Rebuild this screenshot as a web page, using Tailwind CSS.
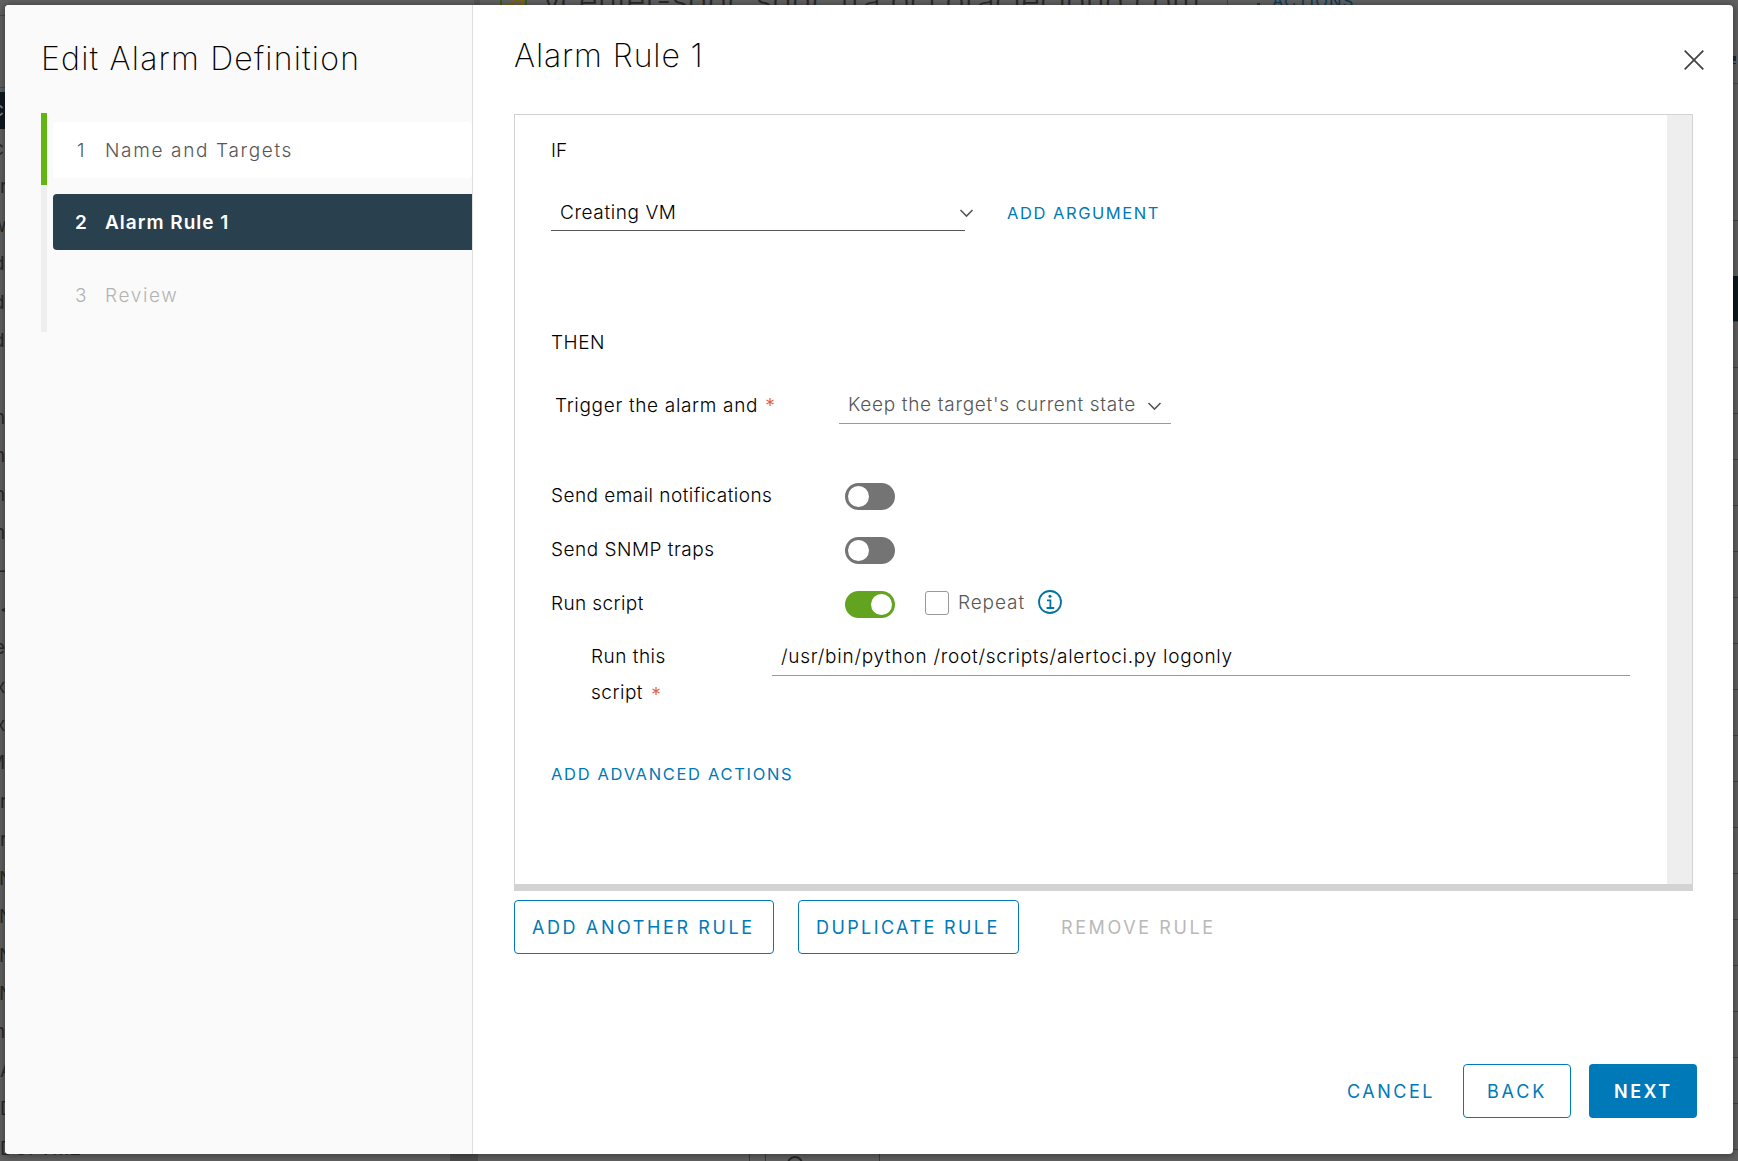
<!DOCTYPE html>
<html lang="en">
<head>
<meta charset="utf-8">
<title>Edit Alarm Definition</title>
<script src="https://cdn.jsdelivr.net/npm/@tailwindcss/browser@4"></script>
</head>
<body class="relative h-[1161px] w-[1738px] overflow-hidden whitespace-nowrap bg-[#616161] font-['Inter',sans-serif] text-[19px] font-light leading-[28px] text-black">

<!-- Dimmed page behind the dialog -->
<div class="absolute inset-0 overflow-hidden font-normal text-[#2a2a2a]" aria-hidden="true">
  <div class="absolute left-0 top-[15px] h-px w-[5px] bg-[#4a4a4a]"></div>
  <div class="absolute left-0 top-[87px] h-px w-[5px] bg-[#4a4a4a]"></div>
  <div class="absolute left-0 top-[92px] h-[37px] w-[5px] overflow-hidden bg-[#0f1a1e] leading-[36px] text-[#8a8a8a]"><span class="-ml-[7px]">c</span></div>
  <div class="absolute left-0 top-[130px] flex w-[5px] flex-col overflow-hidden leading-[38.4px]">
    <span class="-ml-[7px]">c</span><span>r</span><span class="-ml-[9px]">w</span><span class="-ml-[7px]">d</span><span class="-ml-[7px]">d</span><span class="-ml-[7px]">d</span><span class="h-[38.4px]"></span><span class="-ml-[6px]">n</span><span class="-ml-[6px]">n</span><span class="-ml-[6px]">n</span><span class="-ml-[6px]">n</span><span class="-ml-[2px]">-</span><span>&lt;</span><span class="-ml-[6px]">e</span><span class="-ml-[5px]">x</span><span class="-ml-[5px]">x</span><span class="-ml-[12px]">M</span><span>r</span><span>r</span><span class="-ml-px">N</span><span class="-ml-px">N</span><span class="-ml-px">N</span><span class="-ml-px">N</span><span class="-ml-[6px]">n</span><span>A</span><span>D</span>
  </div>
  <div class="absolute left-0 top-[1130px] leading-[38px]">DGFVM2</div>
  <div class="absolute left-[474px] top-0 h-[5px] w-[6px] bg-[#565656]"></div>
  <div class="absolute left-[450px] top-[1154px] h-[7px] w-[28px] bg-[#4c4c4c]"></div>
  <div class="absolute left-[500px] -top-[20px] h-[40px] w-[27px] border-2 border-[#3c5a10]"></div>
  <svg class="absolute left-[504px] top-0" width="20" height="5" fill="none" stroke="#7a640c" stroke-width="2"><path d="M2 5V4H9V2M9 1H18V4H13"/></svg>
  <div class="absolute left-[543px] -top-[19px] text-[32px] font-light leading-[40px] tracking-[0.43px]">vcenter-sddc.sddc.fra.oci.oraclecloud.com</div>
  <div class="absolute left-[1227px] top-0 h-[5px] w-px bg-[#444]"></div>
  <div class="absolute left-[1257px] top-[3px] size-[3px] bg-[#0a3a58]"></div>
  <div class="absolute left-[1272px] -top-[18px] text-[16.5px] leading-[38px] tracking-[1.3px] text-[#0a3a58]">ACTIONS</div>
  <div class="absolute left-[1733px] top-[56px] h-[5px] w-[3px] bg-[#16285a]"></div>
  <div class="absolute left-[1733px] top-[63px] h-px w-[3px] bg-[#16285a]"></div>
  <div class="absolute left-[1733px] top-[83px] h-px w-[5px] bg-[#4a4a4a]"></div>
  <div class="absolute left-[1733px] top-[220px] h-px w-[5px] bg-[#444]"></div>
  <div class="absolute left-[1733px] top-[276px] h-[45px] w-[5px] bg-[#0c191d]"></div>
  <div class="absolute left-[1733px] top-[321px] flex w-[5px] flex-col gap-[45px]">
    <i class="h-px bg-[#444]"></i><i class="h-px bg-[#444]"></i><i class="h-px bg-[#444]"></i><i class="h-px bg-[#444]"></i><i class="h-px bg-[#444]"></i><i class="h-px bg-[#444]"></i><i class="h-px bg-[#444]"></i><i class="h-px bg-[#444]"></i><i class="h-px bg-[#444]"></i><i class="h-px bg-[#444]"></i><i class="h-px bg-[#444]"></i><i class="h-px bg-[#444]"></i><i class="h-px bg-[#444]"></i><i class="h-px bg-[#444]"></i><i class="h-px bg-[#444]"></i><i class="h-px bg-[#444]"></i><i class="h-px bg-[#444]"></i><i class="h-px bg-[#444]"></i><i class="h-px bg-[#444]"></i>
  </div>
  <div class="absolute left-[749px] top-[1154px] h-[7px] w-[17px] border-x border-[#3c3c3c]"></div>
  <div class="absolute left-[879px] top-[1154px] h-[7px] w-px bg-[#3c3c3c]"></div>
  <div class="absolute left-[787px] top-[1156px] size-[16px] rounded-full border-2 border-[#2a2a2a]"></div>
</div>

<!-- Wizard dialog -->
<div class="absolute left-[5px] top-[5px] flex h-[1149px] w-[1728px] overflow-hidden rounded-[4px] bg-white shadow-[0_1px_6px_2px_rgba(0,0,0,0.3)]" role="dialog">
  <aside class="w-[468px] shrink-0 border-r border-[#dedede] bg-[#fafafa] pl-9 pt-[34px]">
    <h1 class="h-10 text-[32px] font-extralight leading-10 tracking-[1.2px]">Edit Alarm Definition</h1>
    <ol class="mt-[34px]">
      <li class="h-[72px] border-l-6 border-[#60b515] pl-1.5 pt-[9px]">
        <div class="flex h-14 items-center rounded-[4px] bg-white pt-[2px] text-[#565656]"><span class="w-[52px] pl-6">1</span><span class="tracking-[1.65px]">Name and Targets</span></div>
      </li>
      <li class="h-[73px] border-l-6 border-[#eee] pl-1.5 pt-[9px]">
        <div class="flex h-14 items-center rounded-l-[4px] bg-[#29404f] pt-[2px] font-semibold text-white"><span class="w-[52px] pl-[22px]">2</span><span class="tracking-[1px]">Alarm Rule 1</span></div>
      </li>
      <li class="h-[74px] border-l-6 border-[#eee] pl-1.5 pt-[9px]">
        <div class="flex h-14 items-center pt-[2px] text-[#b3b3b3]"><span class="w-[52px] pl-[22px]">3</span><span class="tracking-[1.65px]">Review</span></div>
      </li>
    </ol>
  </aside>

  <main class="flex grow flex-col pb-9 pl-[41px] pr-9 pt-[31px]">
    <header class="flex h-10 items-start justify-between">
      <h2 class="text-[32px] font-extralight leading-10 tracking-[0.9px]">Alarm Rule 1</h2>
      <svg class="-mr-[7px] mt-[14px]" width="20" height="20" fill="none" stroke="#454545" stroke-width="1.8"><path d="M.7.7 19.3 19.3M19.3.7.7 19.3"/></svg>
    </header>

    <section class="mr-1 mt-[38px] flex h-[777px] border border-b-7 border-[#d3d3d3]">
      <div class="grow pl-9 pt-[15px]">
        <div class="h-10 leading-[42px]">IF</div>
        <div class="mt-6 flex h-[37px] items-center">
          <div class="flex h-[37px] w-[414px] items-center border-b border-[#565656] pl-[9px]"><span class="mt-[2px] tracking-[0.6px]">Creating VM</span>
            <svg class="-mr-[9px] ml-auto mt-[2px]" width="15" height="9" fill="none" stroke="#565656" stroke-width="1.6"><path d="M1.5 1 7.5 7 13.5 1"/></svg>
          </div>
          <a class="ml-[42px] mt-px text-[16.5px] font-normal tracking-[1.55px] text-[#0079b8]">ADD ARGUMENT</a>
        </div>
        <div class="mt-[91px] h-10 leading-[42px] tracking-[0.5px]">THEN</div>
        <div class="mt-[25px] flex h-[37px] items-center">
          <label class="flex w-[288px] items-center pl-1"><span class="tracking-[0.67px]">Trigger the alarm and</span><svg class="-mt-[7px] ml-2" width="8" height="8" stroke="#e0604c" stroke-width="1.2"><path d="M4 0V8M.5 2 7.5 6M7.5 2 .5 6"/></svg></label>
          <div class="flex h-[37px] w-[332px] items-center border-b border-[#9a9a9a] pl-[9px] text-[#565656]"><span class="tracking-[0.7px]">Keep the target's current state</span>
            <svg class="ml-auto mr-[9px] mt-[2px]" width="15" height="9" fill="none" stroke="#565656" stroke-width="1.6"><path d="M1.5 1 7.5 7 13.5 1"/></svg>
          </div>
        </div>
        <div class="mt-11 flex h-[54px] items-center"><span class="mt-[2px] w-[294px] tracking-[0.46px]">Send email notifications</span>
          <span class="mt-[3px] flex h-[27px] w-[50px] items-center rounded-full bg-[#747474] px-[3px]"><i class="size-[21px] rounded-full bg-white"></i></span></div>
        <div class="flex h-[54px] items-center"><span class="mt-[2px] w-[294px] tracking-[0.5px]">Send SNMP traps</span>
          <span class="mt-[3px] flex h-[27px] w-[50px] items-center rounded-full bg-[#747474] px-[3px]"><i class="size-[21px] rounded-full bg-white"></i></span></div>
        <div class="flex h-[54px] items-center"><span class="mt-[2px] w-[294px] tracking-[0.4px]">Run script</span>
          <span class="mt-[3px] flex h-[27px] w-[50px] items-center justify-end rounded-full bg-[#62a420] px-[3px]"><i class="size-[21px] rounded-full bg-white"></i></span>
          <i class="ml-[30px] size-6 rounded-[3px] border border-[#9a9a9a]"></i>
          <span class="ml-[9px] w-[70px] tracking-[0.9px] text-[#565656]">Repeat</span>
          <svg class="-mt-[2px] ml-[10px]" width="24" height="24" fill="none" stroke="#0072a3" stroke-width="1.8"><circle cx="12" cy="12" r="11"/><path d="M9 10.4H12.4V18M8.6 18H16.2"/><circle cx="12" cy="6.2" r="1.5" fill="#0072a3" stroke="none"/></svg>
        </div>
        <div class="flex items-start pl-10 pt-[9px]">
          <label class="w-[181px] leading-9"><span class="block tracking-[0.5px]">Run this</span><span class="flex items-center"><span class="tracking-[0.5px]">script</span><svg class="-mt-[5px] ml-[9px]" width="8" height="8" stroke="#e0604c" stroke-width="1.2"><path d="M4 0V8M.5 2 7.5 6M7.5 2 .5 6"/></svg></span></label>
          <div class="flex h-[37px] w-[858px] items-center border-b border-[#9a9a9a] pl-[9px] tracking-[0.74px]">/usr/bin/python /root/scripts/alertoci.py logonly</div>
        </div>
        <a class="mt-[43px] block h-10 text-[16.5px] font-normal leading-10 tracking-[1.68px] text-[#0079b8]">ADD ADVANCED ACTIONS</a>
      </div>
      <div class="w-[25px] bg-[#eee]"></div>
    </section>

    <div class="mt-[9px] flex h-[54px] text-[18px] font-normal text-[#0079b8]">
      <button class="flex w-[260px] items-center rounded-[4px] border border-[#0079b8] pl-[17px] pt-px tracking-[2.6px]">ADD ANOTHER RULE</button>
      <button class="ml-6 flex w-[221px] items-center rounded-[4px] border border-[#0079b8] pl-[17px] pt-px tracking-[2.4px]">DUPLICATE RULE</button>
      <button class="ml-[42px] flex items-center pt-px tracking-[2.6px] text-[#b9b9b9]">REMOVE RULE</button>
    </div>

    <footer class="mt-auto flex h-[54px] justify-end text-[18px] font-normal text-[#0079b8]">
      <button class="flex w-[116px] items-center pt-px tracking-[2.5px]">CANCEL</button>
      <button class="flex w-[108px] items-center rounded-[4px] border border-[#0079b8] pl-[23px] pt-px tracking-[2.8px]">BACK</button>
      <button class="ml-[18px] flex w-[108px] items-center rounded-[4px] bg-[#0079b8] pl-[25px] pt-px font-semibold tracking-[2.5px] text-white">NEXT</button>
    </footer>
  </main>
</div>
</body>
</html>
